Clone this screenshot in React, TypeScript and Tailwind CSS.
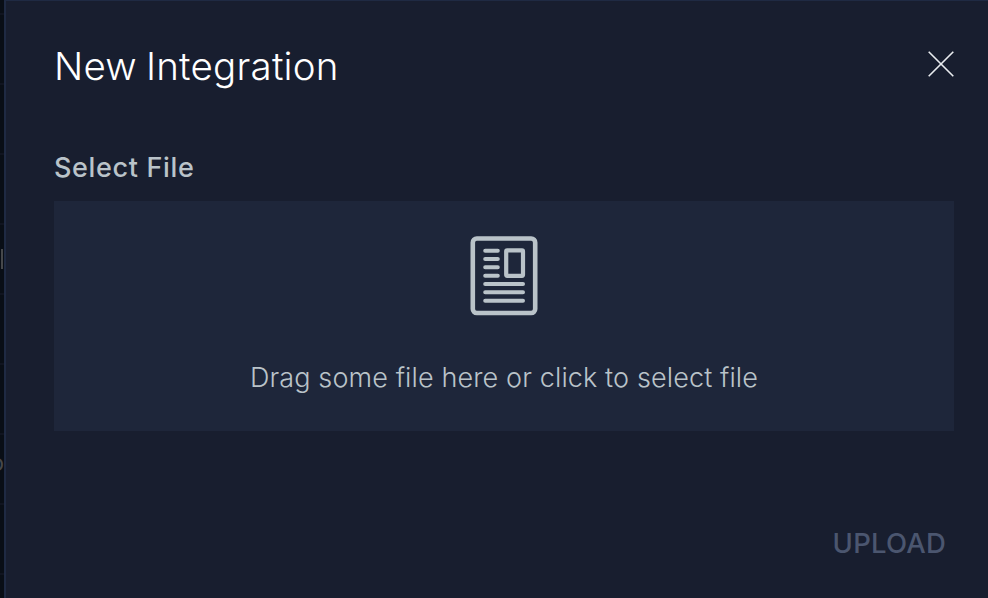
function PageEdge() {
  return (
    <div className="flex h-full w-1 shrink-0 flex-col overflow-hidden bg-[#090e16]">
      <div className="h-[15px] shrink-0 border-b-2 border-[#101420]" />
      <div className="h-[70px] shrink-0 border-b-2 border-[#101420]" />
      <div className="h-[70px] shrink-0 border-b-2 border-[#101420]" />
      <div className="h-[70px] shrink-0 border-b-2 border-[#101420]" />
      <div className="flex h-[70px] shrink-0 items-center border-b-2 border-[#101420] pl-px">
        <div className="h-5 w-[2px] bg-[#46484b]" />
      </div>
      <div className="h-[70px] shrink-0 border-b-2 border-[#101420]" />
      <div className="h-[70px] shrink-0 border-b-2 border-[#101420]" />
      <div className="flex h-[70px] shrink-0 justify-end border-b-2 border-[#101420] pt-[14px] text-[23px] leading-[28px] text-[#46484b]">
        o
      </div>
      <div className="h-[70px] shrink-0 border-b-2 border-[#101420]" />
    </div>
  );
}

function CloseIcon() {
  return (
    <svg width="26" height="26" viewBox="0 0 26 26" fill="none" stroke="#e9ecef" strokeWidth="1.6">
      <path d="M.7.7 25.3 25.3M25.3.7.7 25.3" />
    </svg>
  );
}

function DocumentIcon() {
  return (
    <svg width="68" height="80" viewBox="0 0 68 80" fill="none" stroke="#bac3c9" strokeWidth="4" strokeLinecap="round">
      <rect x="2.8" y="2.5" width="62.4" height="74.5" rx="4" strokeWidth="4.6" />
      <rect x="36.2" y="14.4" width="16.8" height="25.4" rx="1" strokeWidth="4.2" strokeLinejoin="round" />
      <path d="M15.2 14.7h12.6M15.2 23h12.6M15.2 31.3h12.6M15.2 39.7h12.6M15.2 48H53M15.2 56.3H53M15.2 64.7H53" />
    </svg>
  );
}

export default function App() {
  return (
    <div className="flex h-[598px] w-[988px] overflow-hidden bg-[#181e2f] font-['Inter','Liberation_Sans',sans-serif]">
      <PageEdge />
      <main className="flex flex-1 flex-col border-l-2 border-t border-[#1f2a43] pl-12 pr-[34px]">
        <header className="flex items-start justify-between pt-[41px]">
          <h1 className="whitespace-nowrap text-[38.5px] font-light leading-[48px] tracking-[0.22px] text-white [word-spacing:-2px]">
            New Integration
          </h1>
          <button aria-label="Close" className="mt-[9px]">
            <CloseIcon />
          </button>
        </header>
        <h2 className="mt-[61px] whitespace-nowrap text-[27px] font-medium leading-[34px] tracking-[0.65px] text-[#bac3c9]">
          Select File
        </h2>
        <section className="mt-4 flex h-[230px] flex-col items-center bg-[#1e263a] pt-[35px]">
          <DocumentIcon />
          <p className="mt-[45px] whitespace-nowrap text-[27px] font-light leading-[34px] tracking-[0.12px] text-[#bac3c9]">
            Drag some file here or click to select file
          </p>
        </section>
        <footer className="flex justify-end pr-2 pt-[95px]">
          <button className="text-[27.5px] font-medium leading-[34px] tracking-[0.2px] text-[#4b566f]">UPLOAD</button>
        </footer>
      </main>
    </div>
  );
}
